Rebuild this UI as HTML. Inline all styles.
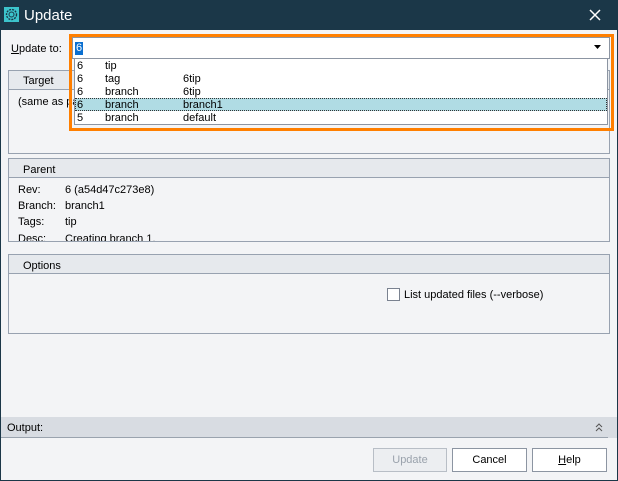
<!DOCTYPE html>
<html><head><style>
*{margin:0;padding:0;box-sizing:border-box}
body{width:618px;height:481px;background:#1b3748;position:relative;overflow:hidden;font-family:"Liberation Sans",sans-serif;font-size:11px;color:#000}
.a{position:absolute}
.t{position:absolute;white-space:nowrap;line-height:13px}
.grp{position:absolute;border:1px solid #98a2b0;background:#f3f4f6}
.hd{position:absolute;left:0;right:0;top:0;height:19px;background:#e6e9ed;border-bottom:1px solid #98a2b0}
.btn{position:absolute;top:448px;height:24px;border:1px solid #8c95a2;background:#fff;text-align:center;line-height:22px}
</style></head><body>
<div class="a" style="left:0;top:0;width:618px;height:30px;background:#1b3748"></div>
<svg class="a" style="left:4px;top:7px" width="15" height="15" viewBox="0 0 15 15"><rect width="15" height="15" fill="#3cc4cc"/><circle cx="7.5" cy="7.5" r="5" fill="none" stroke="#1b3748" stroke-width="1.4" stroke-dasharray="2 1"/><circle cx="7.5" cy="7.5" r="2.5" fill="none" stroke="#1b3748" stroke-width="1"/></svg>
<div class="t" style="left:24px;top:7px;font-size:15px;line-height:17px;color:#fff">Update</div>
<svg class="a" style="left:589px;top:9px" width="12" height="12"><path d="M1 1L11 11M11 1L1 11" stroke="#fff" stroke-width="1.5"/></svg>
<div class="a" style="left:1px;top:30px;width:616px;height:450px;background:#f3f4f6"></div>

<div class="t" style="left:11px;top:43px"><u>U</u>pdate to:</div>

<div class="grp" style="left:8px;top:70px;width:602px;height:84px"><div class="hd"></div></div>
<div class="t" style="left:23px;top:75px">Target</div>
<div class="t" style="left:18px;top:96px">(same as parent)</div>

<div class="grp" style="left:8px;top:158px;width:602px;height:84px;overflow:hidden"><div class="hd"></div>
<div class="t" style="left:14px;top:5px">Parent</div>
<div class="t" style="left:9px;top:25px">Rev:</div><div class="t" style="left:56px;top:25px">6 (a54d47c273e8)</div>
<div class="t" style="left:9px;top:41px">Branch:</div><div class="t" style="left:56px;top:41px">branch1</div>
<div class="t" style="left:9px;top:57px">Tags:</div><div class="t" style="left:56px;top:57px">tip</div>
<div class="t" style="left:9px;top:74px">Desc:</div><div class="t" style="left:56px;top:74px">Creating branch 1.</div>
</div>

<div class="grp" style="left:8px;top:254px;width:602px;height:80px"><div class="hd"></div>
<div class="t" style="left:14px;top:5px">Options</div></div>
<div class="a" style="left:387px;top:288px;width:13px;height:13px;border:1px solid #7a8290;background:#fff"></div>
<div class="t" style="left:404px;top:289px">List updated files (--verbose)</div>

<div class="a" style="left:1px;top:417px;width:616px;height:21px;background:#d8dce2"></div>
<div class="a" style="left:1px;top:437px;width:607px;height:1px;background:#9aa3ae"></div>
<div class="t" style="left:7px;top:422px">Output:</div>
<svg class="a" style="left:595px;top:423px" width="8" height="9"><path d="M1 4L4 1L7 4M1 8L4 5L7 8" fill="none" stroke="#555" stroke-width="1"/></svg>

<div class="btn" style="left:373px;width:74px;background:#eceef1;border-color:#b8bec6;color:#9aa2ac">Update</div>
<div class="btn" style="left:452px;width:75px">Cancel</div>
<div class="btn" style="left:532px;width:75px"><u>H</u>elp</div>

<div class="a" style="left:69px;top:34px;width:545px;height:97px;border:3px solid #ff7f00"></div>
<div class="a" style="left:72px;top:37px;width:538px;height:22px;border:1px solid #8c95a2;background:#fff"></div>
<div class="t" style="left:75px;top:42px;background:#0a6fd0;color:#fff;padding:0 1px">6</div>
<svg class="a" style="left:594px;top:45px" width="7" height="4"><path d="M0 0H7L3.5 4Z" fill="#000"/></svg>
<div class="a" style="left:74px;top:58px;width:534px;height:67px;border:1px solid #8c95a2;background:#fff"></div>
<div class="a" style="left:75px;top:98px;width:532px;height:13px;background:#b0dce4;border:1px dotted #333"></div>
<div class="t" style="left:77px;top:60px">6</div><div class="t" style="left:105px;top:60px">tip</div>
<div class="t" style="left:77px;top:73px">6</div><div class="t" style="left:105px;top:73px">tag</div><div class="t" style="left:183px;top:73px">6tip</div>
<div class="t" style="left:77px;top:86px">6</div><div class="t" style="left:105px;top:86px">branch</div><div class="t" style="left:183px;top:86px">6tip</div>
<div class="t" style="left:77px;top:99px">6</div><div class="t" style="left:105px;top:99px">branch</div><div class="t" style="left:183px;top:99px">branch1</div>
<div class="t" style="left:77px;top:112px">5</div><div class="t" style="left:105px;top:112px">branch</div><div class="t" style="left:183px;top:112px">default</div>
</body></html>
